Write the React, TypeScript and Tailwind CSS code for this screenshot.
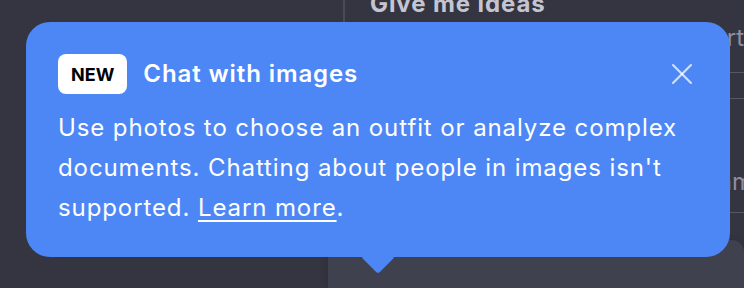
import { X } from 'lucide-react';

function IdeaRow({ text, className }: { text: string; className: string }) {
  return (
    <div className={`flex items-end justify-end overflow-hidden border-b border-[#565869] ${className}`}>
      <span className="whitespace-nowrap text-[24px] leading-none text-[#8e8ea0]">{text}</span>
    </div>
  );
}

function Tooltip() {
  return (
    <div className="absolute left-[26px] top-[22px] w-[704px] rounded-3xl bg-[#4d87f6] px-8 pb-[29px] pt-8 text-white">
      <div className="flex items-center">
        <span className="flex h-10 items-center rounded-lg bg-white px-[13px] text-[18px] font-bold text-black">
          NEW
        </span>
        <h2 className="ml-4 text-[24px] font-semibold tracking-[0.9px]">Chat with images</h2>
        <button className="-mr-[2px] ml-auto text-white/75">
          <X size={36} strokeWidth={1.4} />
        </button>
      </div>
      <p className="mt-3.5 text-[24px] leading-[40px] tracking-[0.9px]">
        Use photos to choose an outfit or analyze complex documents. Chatting about people in images
        isn't supported.{' '}
        <a href="#" className="underline decoration-[1.5px] underline-offset-[4px]">
          Learn more
        </a>
        .
      </p>
      <div className="absolute -bottom-3 left-[340px] h-6 w-6 rotate-45 rounded-[3px] bg-[#4d87f6]" />
    </div>
  );
}

export default function App() {
  return (
    <div
      className="relative flex h-[288px] w-[744px] flex-col overflow-hidden bg-[#343541]"
      style={{ fontFamily: 'Inter, "Noto Sans", sans-serif' }}
    >
      <div className="grid h-[256px] grid-cols-[343px_1fr]">
        <div />
        <div className="flex flex-col border-l-2 border-[#4a4b58]">
          <h3 className="-mt-[6px] ml-[25px] text-[24px] font-bold leading-[20px] tracking-[0.9px] text-[#c5c5d2]">
            Give me ideas
          </h3>
          <IdeaRow text="Help me start" className="h-[59px] pb-[22px]" />
          <IdeaRow text="" className="h-[26px]" />
          <IdeaRow text="Plan a trip for my team" className="-mr-[9px] h-[114px] pb-[18px]" />
        </div>
      </div>
      <div className="pl-[328px]">
        <div className="h-12 rounded-t-xl bg-[#40414f] shadow-[0_0_10px_rgba(0,0,0,0.15)]" />
      </div>
      <Tooltip />
    </div>
  );
}
